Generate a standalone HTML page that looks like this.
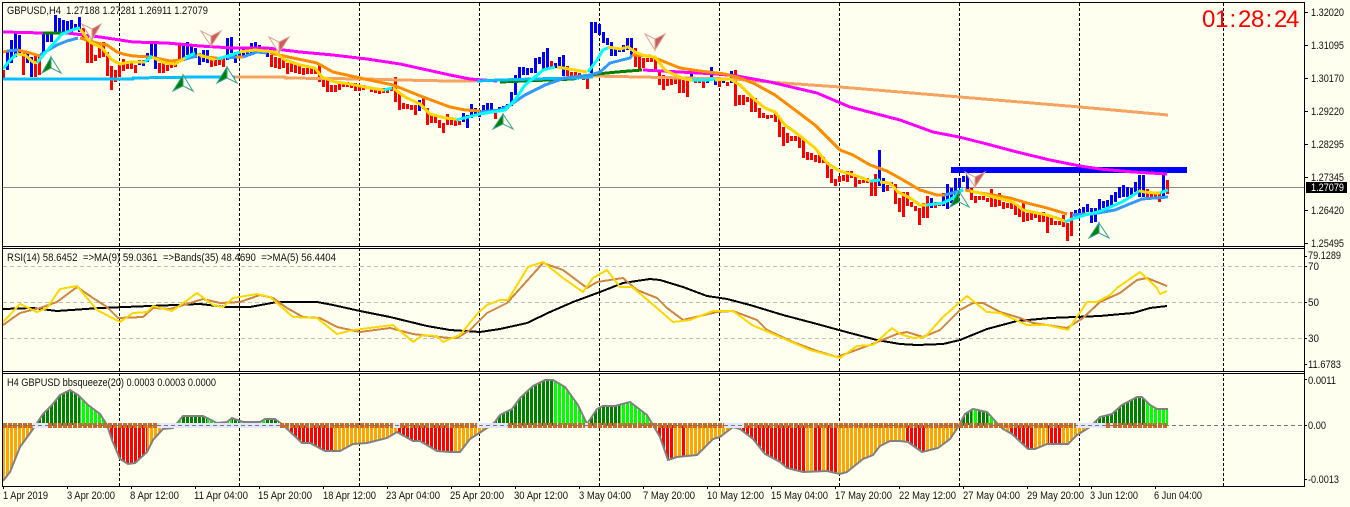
<!DOCTYPE html>
<html><head><meta charset="utf-8"><title>GBPUSD,H4</title>
<style>html,body{margin:0;padding:0;background:#fffff0;width:1350px;height:507px;overflow:hidden}svg{display:block}text{font-family:"Liberation Sans",sans-serif;font-size:11px;fill:#111}</style></head><body>
<svg width="1350" height="507" viewBox="0 0 1350 507" xmlns="http://www.w3.org/2000/svg">
<defs>
<clipPath id="h"><polygon points="3,425 3,481 10,472 20,447 33,429 43,414 52,405 60,395 70,390 78,395 88,405 100,414 107,425 112,440 120,459 128,464 135,463 147,452 153,440 163,429 173,428 183,416 203,416 217,423 227,422 232,418 243,422 260,422 265,419 275,419 283,425 302,443 310,443 325,451 340,451 353,444 367,443 387,438 397,432 413,441 420,441 437,451 450,452 460,452 470,439 487,428 495,422 500,415 512,409 520,398 533,386 545,380 553,380 565,387 578,405 587,424 597,409 603,406 615,406 630,402 647,415 653,425 660,437 668,460 677,457 697,455 713,439 720,437 733,427 740,429 753,439 765,454 780,462 787,468 803,472 827,471 840,474 847,472 863,459 873,455 880,446 890,441 900,441 908,442 922,452 938,448 950,439 958,427 965,414 973,409 987,412 998,424 1003,429 1012,434 1028,449 1035,449 1047,444 1068,444 1077,435 1090,427 1100,417 1112,414 1122,405 1137,397 1142,397 1150,405 1157,409 1168,409 1168,425"/></clipPath>
</defs>
<rect width="1350" height="507" fill="#fffff0"/>
<!-- grid -->
<path d="M119.5 3V486M239.5 3V486M359.5 3V486M479.5 3V486M599.5 3V486M719.5 3V486M839.5 3V486M959.5 3V486M1079.5 3V486M1223.5 3V486" stroke="#000" stroke-dasharray="3 2" fill="none" shape-rendering="crispEdges"/>
<path d="M3 266.500H1304M3 302.500H1304M3 338.500H1304" stroke="#bdbdb5" stroke-dasharray="4 3" fill="none" shape-rendering="crispEdges"/>
<path d="M3 187.500H1304" stroke="#8a8a8a" fill="none" shape-rendering="crispEdges"/>
<!-- red bars -->
<path shape-rendering="crispEdges" stroke="#f00" stroke-width="3" fill="none" d="M3.500 70V78M23.500 53V75M35.500 55V77M39.500 57V75M83.500 28V40M87.500 37V63M91.500 43V63M95.500 55V61M99.500 45V58M103.500 42V57M107.500 52V76M111.500 66V90M115.500 70V82M119.500 65V77M123.500 59V71M127.500 63V69M131.500 63V69M135.500 65V73M159.500 63V73M163.500 63V73M167.500 65V71M171.500 63V68M175.500 60V67M179.500 45V59M211.500 60V67M215.500 60V66M219.500 57V65M223.500 57V67M271.500 55V67M275.500 57V68M279.500 58V69M283.500 60V68M287.500 63V74M291.500 63V72M295.500 65V73M299.500 65V74M303.500 68V75M307.500 68V74M311.500 68V74M315.500 68V74M319.500 65V82M323.500 77V87M327.500 80V92M331.500 85V92M335.500 85V92M339.500 83V90M343.500 82V87M347.500 82V87M351.500 83V88M355.500 83V91M359.500 85V91M363.500 85V90M367.500 86V89M371.500 87V92M375.500 88V93M379.500 88V94M383.500 88V93M387.500 88V93M391.500 87V91M395.500 77V102M399.500 93V110M403.500 103V109M407.500 104V109M411.500 105V110M415.500 105V115M423.500 97V109M427.500 108V125M431.500 115V123M435.500 115V123M439.500 120V128M443.500 123V133M447.500 114V125M451.500 120V125M455.500 120V126M459.500 121V125M495.500 113V119M551.500 61V69M567.500 66V76M571.500 72V76M575.500 72V76M579.500 73V77M583.500 75V80M587.500 78V89M635.500 48V67M639.500 55V70M643.500 58V68M647.500 58V62M651.500 57V62M655.500 57V72M659.500 70V85M663.500 75V90M667.500 78V86M671.500 78V85M675.500 78V84M679.500 77V93M683.500 80V93M687.500 80V97M695.500 78V83M699.500 79V83M703.500 80V88M719.500 80V87M727.500 82V86M735.500 70V106M739.500 95V105M743.500 95V105M747.500 97V102M751.500 98V112M755.500 98V112M759.500 108V118M763.500 113V118M767.500 115V119M771.500 115V118M775.500 112V122M779.500 117V137M783.500 127V146M787.500 133V143M791.500 136V141M795.500 136V141M799.500 135V148M803.500 140V158M807.500 152V160M811.500 153V160M815.500 155V162M819.500 155V163M823.500 157V163M827.500 162V178M831.500 169V183M835.500 179V186M839.500 176V182M843.500 175V181M847.500 171V182M851.500 171V178M855.500 177V187M859.500 180V184M863.500 180V183M867.500 178V183M871.500 182V196M875.500 174V196M887.500 185V191M891.500 182V185M895.500 184V204M899.500 198V212M903.500 192V217M907.500 192V206M911.500 202V207M915.500 206V211M919.500 208V225M923.500 203V218M927.500 196V218M935.500 202V208M939.500 202V206M971.500 188V200M975.500 196V203M979.500 196V200M983.500 196V200M987.500 198V202M991.500 189V207M995.500 199V207M999.500 193V206M1003.500 202V209M1007.500 203V208M1011.500 203V209M1015.500 205V215M1019.500 206V217M1023.500 203V222M1027.500 213V221M1031.500 213V220M1035.500 213V218M1039.500 212V222M1043.500 212V222M1047.500 215V233M1051.500 218V225M1055.500 221V225M1059.500 221V225M1063.500 215V227M1067.500 223V241M1071.500 212V236M1147.500 189V199M1151.500 193V197M1155.500 193V197M1159.500 192V202M1167.500 180V194"/>
<!-- blue bars -->
<path shape-rendering="crispEdges" stroke="#00f" stroke-width="3" fill="none" d="M7.500 52V70M11.500 40V63M15.500 32V57M19.500 35V55M27.500 53V63M31.500 57V77M43.500 32V55M47.500 33V42M51.500 33V42M55.500 15V33M59.500 18V33M63.500 20V33M67.500 21V33M71.500 20V32M75.500 24V30M79.500 17V32M139.500 60V65M143.500 60V66M147.500 53V62M151.500 43V58M155.500 43V69M183.500 45V58M187.500 42V55M191.500 45V57M195.500 48V58M199.500 53V65M203.500 50V62M207.500 50V63M227.500 38V60M231.500 37V53M235.500 52V63M239.500 52V58M243.500 49V57M247.500 47V55M251.500 43V53M255.500 42V52M259.500 45V52M263.500 47V52M267.500 52V57M419.500 100V111M463.500 113V122M467.500 115V128M471.500 104V118M475.500 108V115M479.500 110V117M483.500 105V112M487.500 103V110M491.500 103V113M499.500 107V112M503.500 106V110M507.500 104V109M511.500 92V106M515.500 75V95M519.500 67V82M523.500 67V75M527.500 68V75M531.500 68V73M535.500 58V73M539.500 57V64M543.500 52V71M547.500 48V68M555.500 63V68M559.500 57V67M563.500 55V76M591.500 22V73M595.500 22V33M599.500 24V35M603.500 32V43M607.500 38V45M611.500 42V56M615.500 48V56M619.500 48V52M623.500 45V52M627.500 38V50M631.500 38V55M691.500 74V80M707.500 78V83M711.500 67V78M715.500 80V85M723.500 78V83M731.500 71V83M879.500 150V186M883.500 178V192M931.500 198V208M943.500 193V206M947.500 184V209M951.500 188V203M955.500 178V195M959.500 178V188M963.500 176V182M967.500 172V190M1075.500 210V218M1079.500 209V217M1083.500 207V215M1087.500 204V212M1091.500 208V223M1095.500 208V222M1099.500 199V212M1103.500 201V208M1107.500 200V207M1111.500 195V206M1115.500 192V202M1119.500 187V198M1123.500 185V197M1127.500 187V197M1131.500 188V195M1135.500 182V192M1139.500 175V197M1143.500 175V197M1163.500 175V196"/>
<!-- thick blue level -->
<rect x="951" y="167" width="236" height="6" fill="#00f"/>
<!-- long MAs -->
<g fill="none" stroke-width="3" shape-rendering="crispEdges" stroke-linejoin="round">
<polyline stroke="#f4a460" points="235,77 285,77 285,78 365,79 400,80 450,81 477,81"/>
<polyline stroke="#f4a460" points="593,76 640,77 683,78 733,79 783,83 840,87 900,92 960,97 1080,107 1168,115"/>
<polyline stroke="#f0f" points="3,32 43,33"/>
<polyline stroke="#f0f" points="67,33 100,37 133,42 167,43 200,46 233,48 267,48 300,52 333,55 367,59 400,64 450,75 470,79 497,81"/>
<polyline stroke="#f0f" points="643,70 717,74 737,76 770,82 817,93 850,107 900,120 933,132 959,137 983,143 1017,152 1050,160 1080,166 1100,169 1133,172 1167,174"/>
<polyline stroke="#008000" points="43,33 67,33"/>
<polyline stroke="#008000" points="500,82 573,79 597,74 617,72 642,70"/>
<polyline stroke="#00bfff" points="3,79 133,79 133,78 200,77 235,77"/>
<polyline stroke="#00bfff" points="477,81 500,80 533,79 573,78 593,77"/>
</g>
<!-- slow MA -->
<g fill="none" stroke-width="3" shape-rendering="crispEdges">
<polyline stroke="#ff8c00" points="3,52 7,51"/>
<polyline stroke="#3399ff" points="7,51 18,50"/>
<polyline stroke="#ff8c00" points="18,50 30,53 40,56"/>
<polyline stroke="#3399ff" points="40,55 57,45 67,41 78,38"/>
<polyline stroke="#ff8c00" points="80,38 97,43 107,45 117,52 123,54 133,56 150,57 170,61 182,60"/>
<polyline stroke="#3399ff" points="182,60 197,56"/>
<polyline stroke="#ff8c00" points="200,56 223,59"/>
<polyline stroke="#3399ff" points="227,58 236,57"/>
<polyline stroke="#ff8c00" points="236,57 243,57"/>
<polyline stroke="#3399ff" points="243,57 257,52 267,53"/>
<polyline stroke="#ff8c00" points="270,53 293,58 317,63 333,72 360,78 393,85 423,97 450,107 465,110 480,111"/>
<polyline stroke="#3399ff" points="480,112 500,110 510,105 525,95 545,85 565,78 590,75 600,72 610,63 630,58 632,55"/>
<polyline stroke="#ff8c00" points="632,55 650,56 660,60 680,68 700,71 725,74 740,78 755,84 775,95 795,110 815,125 830,140 840,150 853,155 870,165 887,171 903,180 920,190 937,195 945,195"/>
<polyline stroke="#3399ff" points="945,195 963,190"/>
<polyline stroke="#ff8c00" points="965,190 980,193 993,195 1010,198 1027,203 1047,208 1067,214"/>
<polyline stroke="#3399ff" points="1072,215 1085,214"/>
<polyline stroke="#ff8c00" points="1085,214 1092,214"/>
<polyline stroke="#3399ff" points="1092,214 1115,210 1132,203 1142,199 1168,197"/>
</g>
<!-- fast MA -->
<g fill="none" stroke-width="3" shape-rendering="crispEdges">
<polyline stroke="#0ff" points="3,69 10,60 17,54"/>
<polyline stroke="#ffd700" points="17,54 25,55 33,62 37,63"/>
<polyline stroke="#0ff" points="37,63 45,53 55,42 62,34 75,29 80,28"/>
<polyline stroke="#ffd700" points="80,29 90,42 102,48 112,60 120,64 130,62 145,62"/>
<polyline stroke="#0ff" points="145,62 152,56"/>
<polyline stroke="#ffd700" points="152,57 165,63 175,64 185,58"/>
<polyline stroke="#0ff" points="185,58 195,53"/>
<polyline stroke="#ffd700" points="197,54 215,60"/>
<polyline stroke="#0ff" points="217,59 228,56 240,52"/>
<polyline stroke="#ffd700" points="240,52 255,50 275,52 285,60 300,65 315,68 322,77 335,82 350,84 370,88 384,90"/>
<polyline stroke="#0ff" points="384,90 392,88"/>
<polyline stroke="#ffd700" points="393,88 405,97 420,104 430,114 445,118 456,119"/>
<polyline stroke="#0ff" points="456,120 480,114 505,110 515,100 525,85 535,77 543,70 555,67"/>
<polyline stroke="#ffd700" points="557,67 575,70 587,72"/>
<polyline stroke="#0ff" points="588,72 597,60 603,50 610,47"/>
<polyline stroke="#ffd700" points="608,47 620,49 628,47 635,52 645,56 655,57 665,70 675,75 685,79 692,80"/>
<polyline stroke="#0ff" points="692,80 708,80 715,79"/>
<polyline stroke="#ffd700" points="715,80 730,79 740,85 755,100 765,108 775,112 785,125 795,132 805,140 815,148 827,163 835,168 840,171 857,176 870,181"/>
<polyline stroke="#0ff" points="870,181 880,180"/>
<polyline stroke="#ffd700" points="880,182 890,183 898,192 910,198 920,205 926,205"/>
<polyline stroke="#0ff" points="926,205 943,203 953,198 963,189"/>
<polyline stroke="#ffd700" points="970,191 980,193 993,197 1010,201 1017,205 1023,210 1037,213 1047,215 1057,218 1067,222"/>
<polyline stroke="#0ff" points="1065,222 1072,219 1085,215 1098,212 1108,208 1122,202 1132,196 1139,191"/>
<polyline stroke="#ffd700" points="1139,191 1145,192 1155,193 1160,193"/>
<polyline stroke="#0ff" points="1160,193 1168,190"/>
</g>
<!-- up arrows -->
<g stroke="#2f9f8f" stroke-width="1">
<path d="M51 57L42 73L51 68Z" fill="#008000"/><path d="M51 57L61 73L51 68Z" fill="#fffff0"/>
<path d="M183 75L173 91L183 86Z" fill="#008000"/><path d="M183 75L193 91L183 86Z" fill="#fffff0"/>
<path d="M227 67L217 83L227 78Z" fill="#008000"/><path d="M227 67L237 83L227 78Z" fill="#fffff0"/>
<path d="M503 114L493 129L503 124Z" fill="#008000"/><path d="M503 114L513 129L503 124Z" fill="#fffff0"/>
<path d="M959 191L950 207L959 202Z" fill="#008000"/><path d="M959 191L969 207L959 202Z" fill="none"/>
<path d="M1099 223L1089 238L1099 233Z" fill="#008000"/><path d="M1099 223L1109 238L1099 233Z" fill="#fffff0"/>
</g>
<!-- down arrows -->
<g stroke="#d9a090" stroke-width="1">
<path d="M92 40L82 24L92 29Z" fill="#fffff0"/><path d="M92 40L101 24L92 29Z" fill="#cd5c5c"/>
<path d="M211 46L201 31L211 36Z" fill="#fffff0"/><path d="M211 46L221 31L211 36Z" fill="#cd5c5c"/>
<path d="M279 53L269 37L279 42Z" fill="#fffff0"/><path d="M279 53L289 37L279 42Z" fill="#cd5c5c"/>
<path d="M655 50L645 34L655 39Z" fill="#fffff0"/><path d="M655 50L665 34L655 39Z" fill="#cd5c5c"/>
<path d="M975 187L965 172L975 177Z" fill="#fffff0"/><path d="M975 187L985 172L975 177Z" fill="#cd5c5c"/>
</g>
<!-- RSI lines -->
<g fill="none" shape-rendering="crispEdges">
<polyline stroke="#000" stroke-width="2" points="3,309 33,308 57,311 100,308 150,306 200,304 227,307 250,307 277,302 317,302 333,305 360,311 390,317 427,326 450,330 480,332 500,329 527,323 550,312 573,302 600,292 623,283 650,279 660,280 683,287 707,296 727,299 750,305 783,315 817,324 850,333 877,340 900,344 917,345 943,344 960,340 987,329 1017,321 1050,318 1100,316 1133,313 1150,308 1167,306"/>
<polyline stroke="#cd853f" stroke-width="2" points="3,325 20,313 40,308 57,302 77,287 93,298 107,307 118,318 143,317 153,308 170,309 187,304 203,299 220,303 240,302 260,295 273,298 287,308 303,317 320,318 337,327 360,332 390,328 413,334 430,336 450,338 457,338 470,330 487,313 507,303 543,263 563,270 587,288 597,282 623,278 637,290 657,298 667,308 683,320 717,312 733,311 757,320 767,330 793,342 817,351 837,357 870,345 897,334 907,332 923,337 940,330 960,310 973,303 983,303 1000,312 1020,318 1033,323 1067,328 1083,318 1100,302 1120,293 1137,280 1147,278 1167,286"/>
<polyline stroke="#ffd700" stroke-width="2" points="3,322 20,304 37,312 47,308 60,289 77,286 97,310 120,322 133,313 147,312 153,306 172,311 197,293 213,305 223,307 233,298 257,294 270,297 293,317 317,318 337,334 353,330 393,325 413,342 423,335 437,336 443,342 450,339 460,335 478,313 487,305 500,300 508,300 528,267 543,262 563,278 583,292 593,278 607,270 620,287 632,287 650,302 673,322 690,320 713,311 733,311 752,325 773,334 810,350 840,358 857,346 873,345 892,328 900,334 913,338 925,337 943,317 967,296 987,312 1000,313 1027,325 1047,325 1068,330 1087,302 1097,302 1110,295 1117,288 1140,272 1157,288 1160,294 1167,291"/>
</g>
<!-- Squeeze histogram -->
<g clip-path="url(#h)" shape-rendering="crispEdges">
<rect x="2" y="425" width="1170" height="60" fill="#ffa500"/>
<path fill="#f00" d="M107 425h40v50h-40zM290 425h43v50h-43zM397 425h56v50h-56zM657 425h16v50h-16zM682 425h3v50h-3zM740 425h65v50h-65zM813 425h9v50h-9zM827 425h10v50h-10zM905 425h20v50h-20zM1010 425h23v50h-23zM1048 425h14v50h-14z"/>
<rect x="2" y="370" width="1170" height="55" fill="#0f0"/>
<path fill="#008000" d="M33 375h47v50h-47zM182 375h25v50h-25zM232 375h8v50h-8zM265 375h15v50h-15zM490 375h63v50h-63zM590 375h30v50h-30zM958 375h14v50h-14zM978 375h10v50h-10zM1090 375h55v50h-55z"/>
<path d="M1 430H1172" stroke="#fffff0" stroke-width="120" stroke-dasharray="1 3" fill="none"/>
</g>
<polyline fill="none" stroke="#808080" stroke-width="2" points="3,481 10,472 20,447 33,429 43,414 52,405 60,395 70,390 78,395 88,405 100,414 107,425 112,440 120,459 128,464 135,463 147,452 153,440 163,429 173,428 183,416 203,416 217,423 227,422 232,418 243,422 260,422 265,419 275,419 283,425 302,443 310,443 325,451 340,451 353,444 367,443 387,438 397,432 413,441 420,441 437,451 450,452 460,452 470,439 487,428 495,422 500,415 512,409 520,398 533,386 545,380 553,380 565,387 578,405 587,424 597,409 603,406 615,406 630,402 647,415 653,425 660,437 668,460 677,457 697,455 713,439 720,437 733,427 740,429 753,439 765,454 780,462 787,468 803,472 827,471 840,474 847,472 863,459 873,455 880,446 890,441 900,441 908,442 922,452 938,448 950,439 958,427 965,414 973,409 987,412 998,424 1003,429 1012,434 1028,449 1035,449 1047,444 1068,444 1077,435 1090,427 1100,417 1112,414 1122,405 1137,397 1142,397 1150,405 1157,409 1168,409"/>
<!-- squeeze dots -->
<path d="M33 425.500H48M157 425.500H280M393 425.500H400M477 425.500H508M585 425.500H588M724 425.500H744M1076 425.500H1106M1110 425.500H1113" stroke="#e6e6fa" stroke-width="5" fill="none" shape-rendering="crispEdges"/>
<path d="M3 425.500H33M48 425.500H157M280 425.500H393M400 425.500H477M508 425.500H585M588 425.500H724M744 425.500H1076M1106 425.500H1110M1113 425.500H1168" stroke="#d2691e" stroke-width="5" stroke-dasharray="4 1" fill="none" shape-rendering="crispEdges"/>
<path d="M3 425.500H1304" stroke="#6e7a88" stroke-dasharray="4 3" fill="none" shape-rendering="crispEdges"/>
<!-- frame -->
<path d="M2.500 2.500H1304.500V486.500H2.500ZM2 246.500H1305M2 248.500H1305M2 371.500H1305M2 373.500H1305" fill="none" stroke="#000" shape-rendering="crispEdges"/>
<!-- ticks -->
<path d="M1304 12.500h4M1304 45.500h4M1304 78.500h4M1304 111.500h4M1304 144.500h4M1304 177.500h4M1304 210.500h4M1304 243.500h4M1304 256.500h3M1304 266.500h3M1304 302.500h3M1304 338.500h3M1304 364.500h3M1304 379.500h3M1304 425.500h3M1304 479.500h3M3.500 486v3M67.500 486v3M131.500 486v3M195.500 486v3M259.500 486v3M323.500 486v3M387.500 486v3M451.500 486v3M515.500 486v3M579.500 486v3M643.500 486v3M707.500 486v3M771.500 486v3M835.500 486v3M899.500 486v3M963.500 486v3M1027.500 486v3M1091.500 486v3M1155.500 486v3" stroke="#000" fill="none" shape-rendering="crispEdges"/>
<!-- price box -->
<rect x="1306" y="182" width="41" height="11" fill="#000"/>
<!-- labels -->
<text x="7" y="14" textLength="201" lengthAdjust="spacingAndGlyphs" xml:space="preserve">GBPUSD,H4  1.27188 1.27281 1.26911 1.27079</text>
<text x="7" y="261" textLength="329" lengthAdjust="spacingAndGlyphs" xml:space="preserve">RSI(14) 58.6452  =&gt;MA(9) 59.0361  =&gt;Bands(35) 48.4690  =&gt;MA(5) 56.4404</text>
<text x="7" y="386" textLength="209" lengthAdjust="spacingAndGlyphs">H4 GBPUSD bbsqueeze(20) 0.0003 0.0003 0.0000</text>
<text x="1202 1215 1229.500 1238 1251 1265.500 1274 1286" y="27" style="font-size:24px;fill:#f00">01:28:24</text>
<g>
<text x="1311" y="16" textLength="33" lengthAdjust="spacingAndGlyphs">1.32020</text>
<text x="1311" y="49" textLength="33" lengthAdjust="spacingAndGlyphs">1.31095</text>
<text x="1311" y="82" textLength="33" lengthAdjust="spacingAndGlyphs">1.30170</text>
<text x="1311" y="115" textLength="33" lengthAdjust="spacingAndGlyphs">1.29220</text>
<text x="1311" y="148" textLength="33" lengthAdjust="spacingAndGlyphs">1.28295</text>
<text x="1311" y="181" textLength="33" lengthAdjust="spacingAndGlyphs">1.27345</text>
<text x="1311" y="191" textLength="33" lengthAdjust="spacingAndGlyphs" style="fill:#fff">1.27079</text>
<text x="1311" y="214" textLength="33" lengthAdjust="spacingAndGlyphs">1.26420</text>
<text x="1311" y="247" textLength="33" lengthAdjust="spacingAndGlyphs">1.25495</text>
<text x="1308" y="259" textLength="33" lengthAdjust="spacingAndGlyphs">79.1289</text>
<text x="1308" y="270" textLength="11" lengthAdjust="spacingAndGlyphs">70</text>
<text x="1308" y="306" textLength="11" lengthAdjust="spacingAndGlyphs">50</text>
<text x="1308" y="342" textLength="11" lengthAdjust="spacingAndGlyphs">30</text>
<text x="1308" y="368" textLength="33" lengthAdjust="spacingAndGlyphs">11.6783</text>
<text x="1308" y="384" textLength="28" lengthAdjust="spacingAndGlyphs">0.0011</text>
<text x="1308" y="429" textLength="18" lengthAdjust="spacingAndGlyphs">0.00</text>
<text x="1308" y="483" textLength="31" lengthAdjust="spacingAndGlyphs">-0.0013</text>
</g>
<g>
<text x="3" y="499" textLength="45" lengthAdjust="spacingAndGlyphs">1 Apr 2019</text>
<text x="67" y="499" textLength="48" lengthAdjust="spacingAndGlyphs">3 Apr 20:00</text>
<text x="130" y="499" textLength="49" lengthAdjust="spacingAndGlyphs">8 Apr 12:00</text>
<text x="194" y="499" textLength="54" lengthAdjust="spacingAndGlyphs">11 Apr 04:00</text>
<text x="258" y="499" textLength="54" lengthAdjust="spacingAndGlyphs">15 Apr 20:00</text>
<text x="323" y="499" textLength="53" lengthAdjust="spacingAndGlyphs">18 Apr 12:00</text>
<text x="386" y="499" textLength="54" lengthAdjust="spacingAndGlyphs">23 Apr 04:00</text>
<text x="450" y="499" textLength="54" lengthAdjust="spacingAndGlyphs">25 Apr 20:00</text>
<text x="514" y="499" textLength="54" lengthAdjust="spacingAndGlyphs">30 Apr 12:00</text>
<text x="579" y="499" textLength="52" lengthAdjust="spacingAndGlyphs">3 May 04:00</text>
<text x="643" y="499" textLength="52" lengthAdjust="spacingAndGlyphs">7 May 20:00</text>
<text x="707" y="499" textLength="57" lengthAdjust="spacingAndGlyphs">10 May 12:00</text>
<text x="771" y="499" textLength="57" lengthAdjust="spacingAndGlyphs">15 May 04:00</text>
<text x="835" y="499" textLength="57" lengthAdjust="spacingAndGlyphs">17 May 20:00</text>
<text x="899" y="499" textLength="57" lengthAdjust="spacingAndGlyphs">22 May 12:00</text>
<text x="963" y="499" textLength="57" lengthAdjust="spacingAndGlyphs">27 May 04:00</text>
<text x="1027" y="499" textLength="57" lengthAdjust="spacingAndGlyphs">29 May 20:00</text>
<text x="1090" y="499" textLength="48" lengthAdjust="spacingAndGlyphs">3 Jun 12:00</text>
<text x="1154" y="499" textLength="48" lengthAdjust="spacingAndGlyphs">6 Jun 04:00</text>
</g>
</svg>
</body></html>
